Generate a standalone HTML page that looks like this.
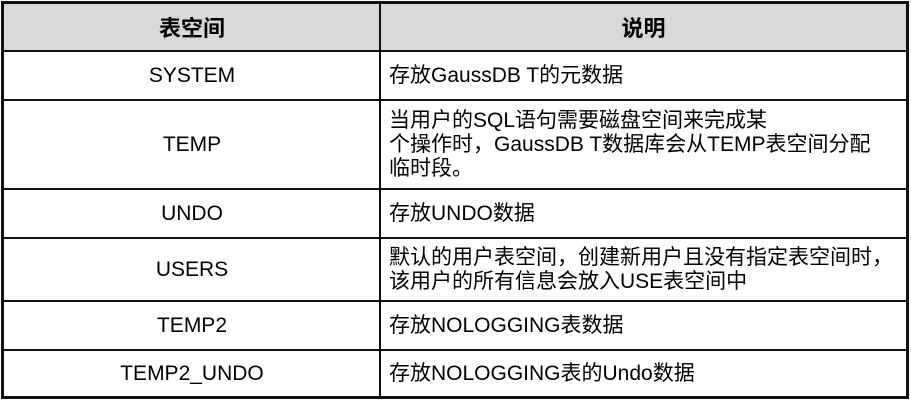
<html><head><style>
body{margin:0;width:911px;height:400px;background:#fff;position:relative;font-family:"Liberation Sans","Noto Sans CJK SC",sans-serif;font-size:21px;color:#000;overflow:hidden}
.l{position:absolute;background:#111}
.c{position:absolute;display:flex;align-items:center;justify-content:center;text-align:center;left:4px;width:376px}
.d{position:absolute;display:flex;align-items:center;left:389px;width:520px;line-height:24px;white-space:nowrap}
</style></head><body>
<div style="position:absolute;left:3px;top:3px;width:904px;height:48px;background:#d9d9d9"></div>
<div class="l" style="left:1px;top:1px;width:908px;height:3px"></div>
<div class="l" style="left:1px;top:396px;width:908px;height:3px"></div>
<div class="l" style="left:1px;top:1px;width:3px;height:398px"></div>
<div class="l" style="left:906px;top:1px;width:3px;height:398px"></div>
<div class="l" style="left:379px;top:1px;width:2px;height:398px"></div>
<div class="l" style="left:1px;top:50px;width:908px;height:2px"></div>
<div class="l" style="left:1px;top:99px;width:908px;height:2px"></div>
<div class="l" style="left:1px;top:188px;width:908px;height:2px"></div>
<div class="l" style="left:1px;top:237px;width:908px;height:2px"></div>
<div class="l" style="left:1px;top:300px;width:908px;height:2px"></div>
<div class="l" style="left:1px;top:349px;width:908px;height:2px"></div>
<div class="c" style="top:4px;height:46px;font-weight:bold;font-size:22px">表空间</div>
<div class="c" style="top:4px;height:46px;left:381px;width:525px;font-weight:bold;font-size:22px">说明</div>
<div class="c" style="top:52px;height:47px">SYSTEM</div>
<div class="d" style="top:52px;height:47px">存放GaussDB T的元数据</div>
<div class="c" style="top:101px;height:87px">TEMP</div>
<div class="d" style="top:101px;height:87px">当用户的SQL语句需要磁盘空间来完成某<br>个操作时，GaussDB T数据库会从TEMP表空间分配<br>临时段。</div>
<div class="c" style="top:190px;height:47px">UNDO</div>
<div class="d" style="top:190px;height:47px">存放UNDO数据</div>
<div class="c" style="top:239px;height:61px">USERS</div>
<div class="d" style="top:239px;height:61px">默认的用户表空间，创建新用户且没有指定表空间时，<br>该用户的所有信息会放入USE表空间中</div>
<div class="c" style="top:302px;height:47px">TEMP2</div>
<div class="d" style="top:302px;height:47px">存放NOLOGGING表数据</div>
<div class="c" style="top:351px;height:45px">TEMP2_UNDO</div>
<div class="d" style="top:351px;height:45px">存放NOLOGGING表的Undo数据</div>
</body></html>
